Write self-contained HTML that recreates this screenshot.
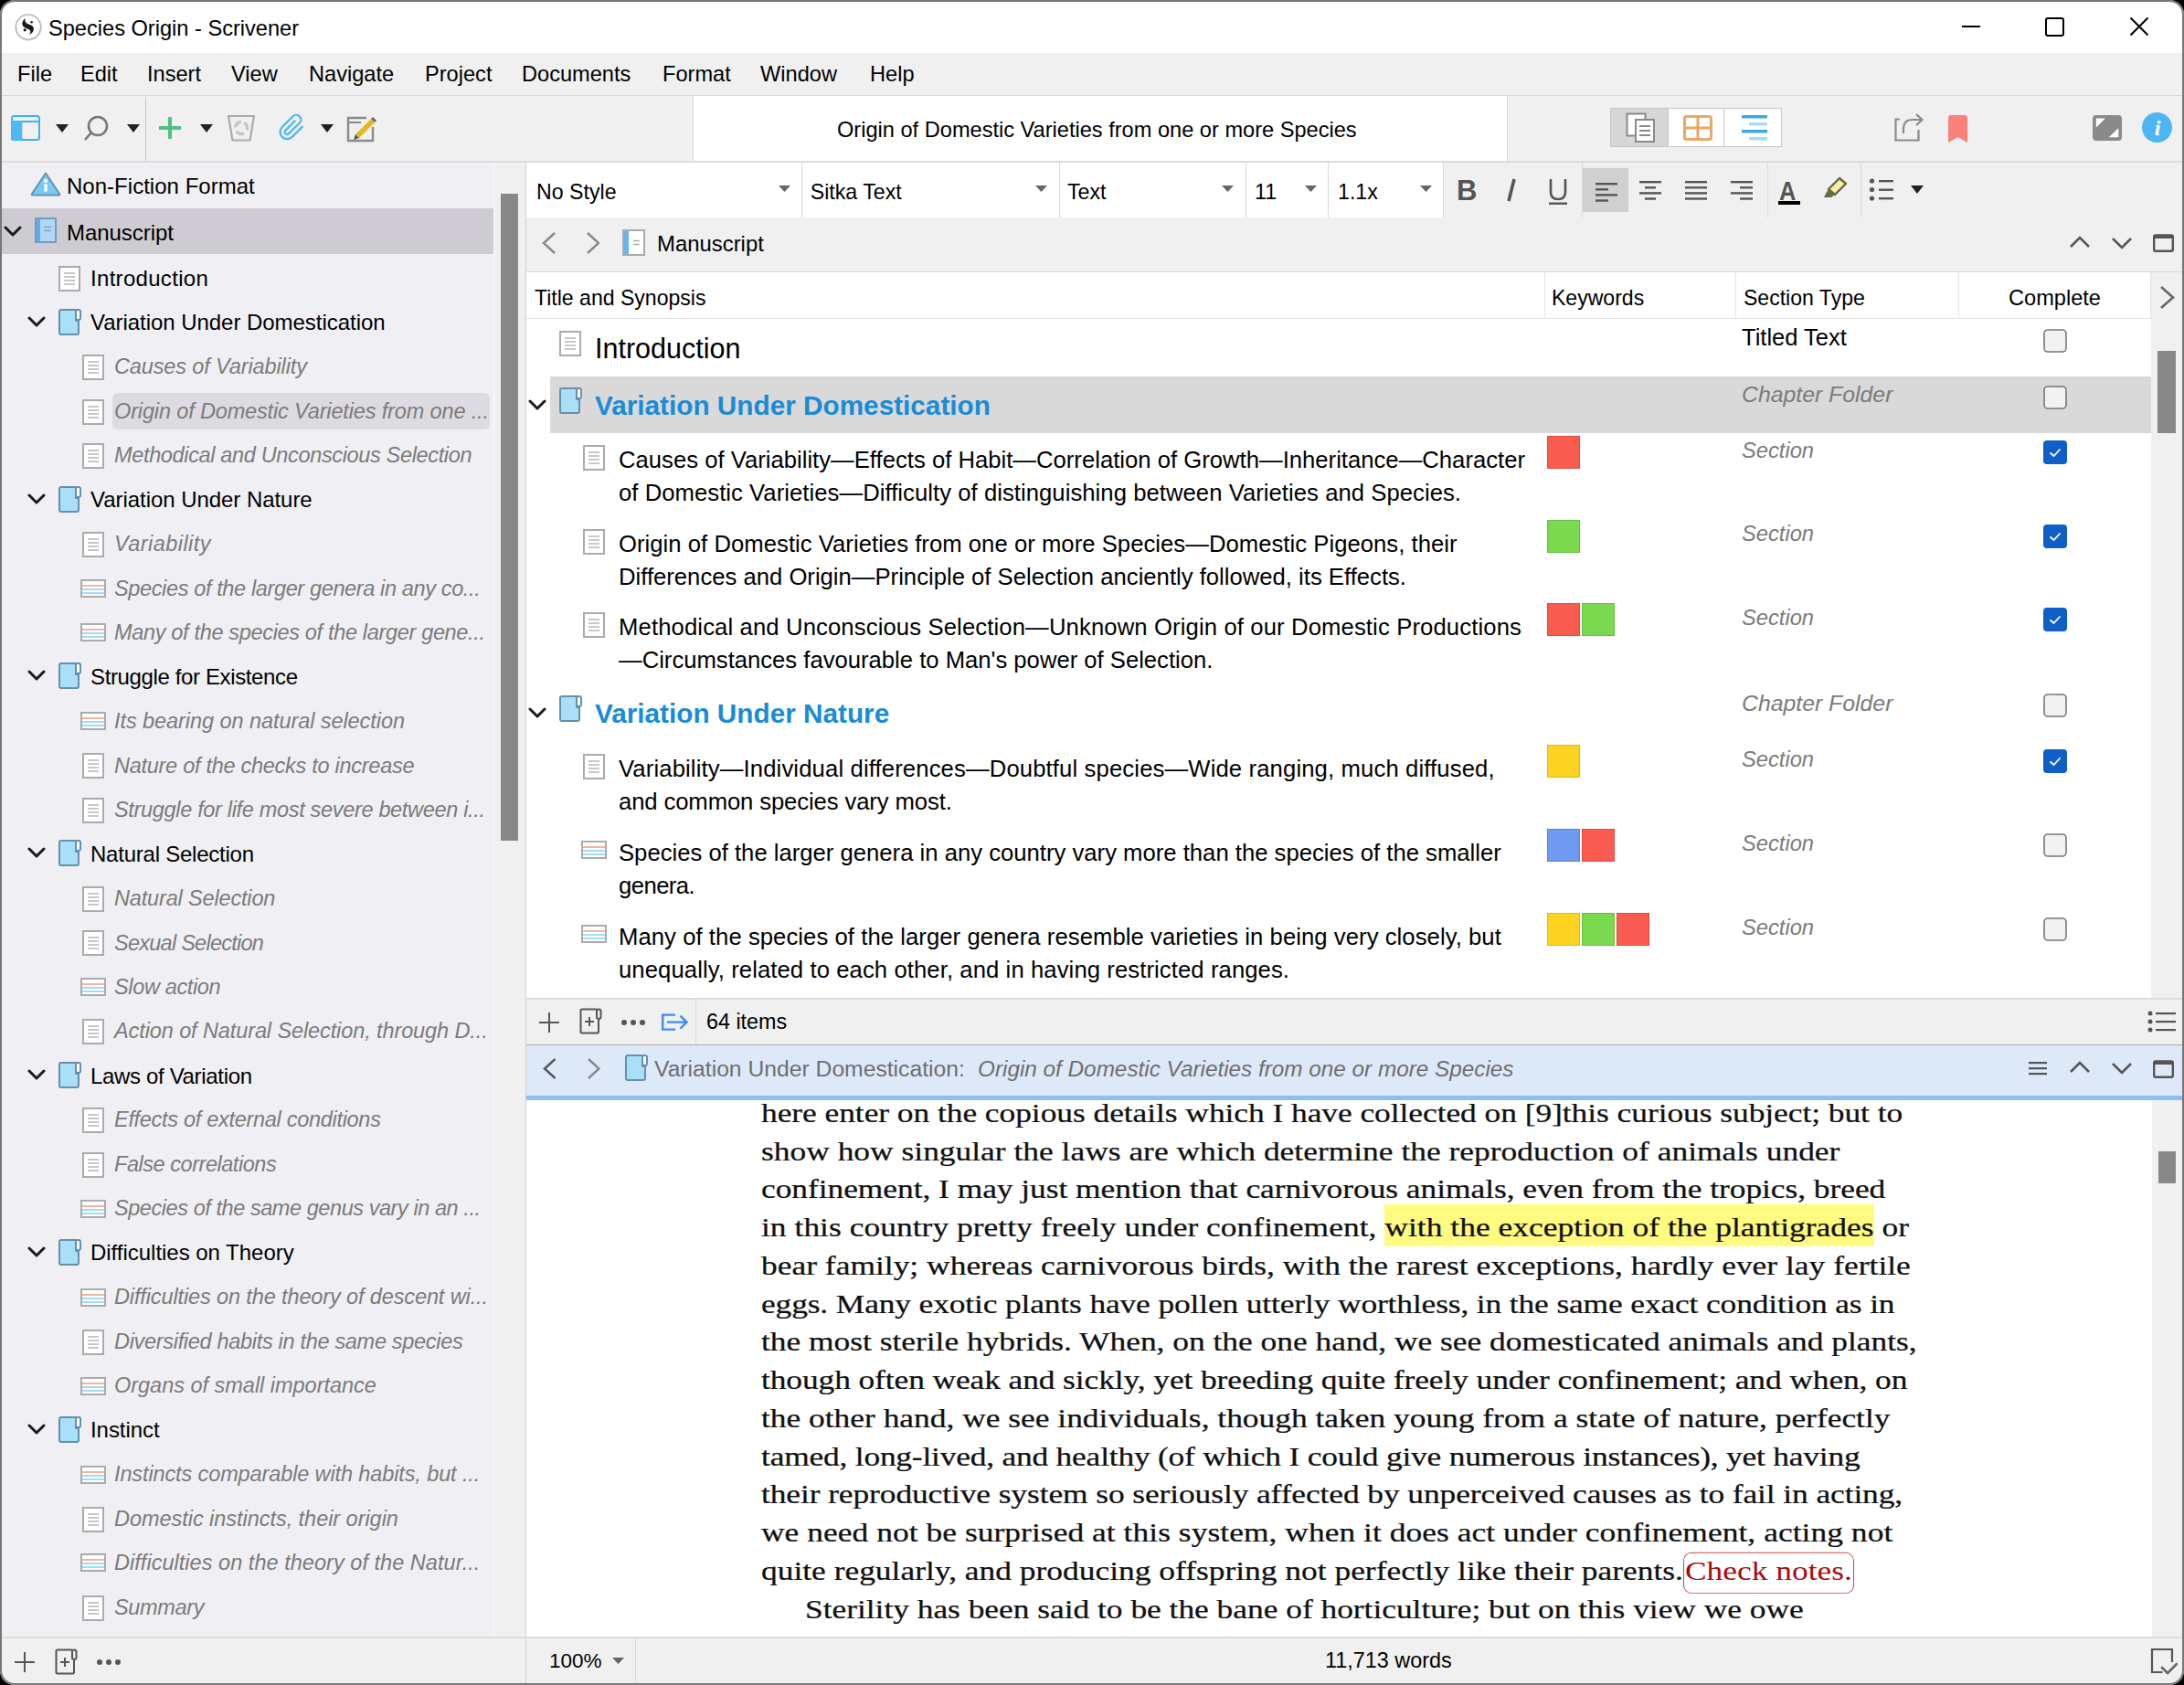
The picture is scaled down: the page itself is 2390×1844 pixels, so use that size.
<!DOCTYPE html>
<html><head><meta charset="utf-8"><style>
html,body{margin:0;padding:0;width:2390px;height:1844px;overflow:hidden;background:#000}
body{position:relative;font-family:'Liberation Sans', sans-serif}
</style></head><body>
<div style="position:absolute;left:0;top:0;width:2390px;height:1844px;border-radius:16px;overflow:hidden">
<div style="position:absolute;left:0px;top:0px;width:2390px;height:1844px;background:#f0f0f0"></div>
<div style="position:absolute;left:2px;top:2px;width:2386px;height:56px;background:#fff"></div>
<div style="position:absolute;left:2px;top:58px;width:2386px;height:47px;background:#f0f0f0"></div>
<div style="position:absolute;left:2px;top:104px;width:2386px;height:1px;background:#d8d8d8"></div>
<svg style="position:absolute;left:15px;top:14px;" width="32" height="32" viewBox="0 0 32 32"><circle cx="16" cy="15.7" r="13.6" fill="#fff" stroke="#a9afb9" stroke-width="1.5"/><circle cx="16" cy="15.9" r="14.6" fill="none" stroke="#d4d8de" stroke-width="0.8"/><path d="M12.8 6.2 C8.2 8.8 8.4 14.8 12.8 16.6 L16.2 18 C18.8 19.2 19.2 21.8 16.6 24 C22.8 22.2 23.6 15.6 19 13.6 L15.6 12.2 C12.8 11.2 11.8 8.8 12.8 6.2 Z" fill="#1a1a1a"/><circle cx="12.2" cy="18.8" r="1.6" fill="#111"/><circle cx="19.6" cy="10.3" r="1.3" fill="#222"/></svg>
<div style="position:absolute;left:53px;top:20.02px;font-family:'Liberation Sans', sans-serif;font-size:23.6px;line-height:23.6px;color:#000;white-space:nowrap;">Species Origin - Scrivener</div>
<div style="position:absolute;left:2147px;top:28px;width:20px;height:2px;background:#000"></div>
<div style="position:absolute;left:2238px;top:19px;width:17px;height:17px;border:2px solid #000;border-radius:3px"></div>
<svg style="position:absolute;left:2330px;top:18px;" width="22" height="22" viewBox="0 0 22 22"><path d="M1.5 1.5 L20.5 20.5 M20.5 1.5 L1.5 20.5" stroke="#000" stroke-width="2" fill="none"/></svg>
<div style="position:absolute;left:19px;top:69.52px;font-family:'Liberation Sans', sans-serif;font-size:23.6px;line-height:23.6px;color:#000;white-space:nowrap;">File</div>
<div style="position:absolute;left:88px;top:69.52px;font-family:'Liberation Sans', sans-serif;font-size:23.6px;line-height:23.6px;color:#000;white-space:nowrap;">Edit</div>
<div style="position:absolute;left:161px;top:69.52px;font-family:'Liberation Sans', sans-serif;font-size:23.6px;line-height:23.6px;color:#000;white-space:nowrap;">Insert</div>
<div style="position:absolute;left:253px;top:69.52px;font-family:'Liberation Sans', sans-serif;font-size:23.6px;line-height:23.6px;color:#000;white-space:nowrap;">View</div>
<div style="position:absolute;left:338px;top:69.52px;font-family:'Liberation Sans', sans-serif;font-size:23.6px;line-height:23.6px;color:#000;white-space:nowrap;">Navigate</div>
<div style="position:absolute;left:465px;top:69.52px;font-family:'Liberation Sans', sans-serif;font-size:23.6px;line-height:23.6px;color:#000;white-space:nowrap;">Project</div>
<div style="position:absolute;left:571px;top:69.52px;font-family:'Liberation Sans', sans-serif;font-size:23.6px;line-height:23.6px;color:#000;white-space:nowrap;">Documents</div>
<div style="position:absolute;left:725px;top:69.52px;font-family:'Liberation Sans', sans-serif;font-size:23.6px;line-height:23.6px;color:#000;white-space:nowrap;">Format</div>
<div style="position:absolute;left:832px;top:69.52px;font-family:'Liberation Sans', sans-serif;font-size:23.6px;line-height:23.6px;color:#000;white-space:nowrap;">Window</div>
<div style="position:absolute;left:952px;top:69.52px;font-family:'Liberation Sans', sans-serif;font-size:23.6px;line-height:23.6px;color:#000;white-space:nowrap;">Help</div>
<div style="position:absolute;left:2px;top:105px;width:2386px;height:72px;background:#f0f0f0"></div>
<div style="position:absolute;left:2px;top:176px;width:2386px;height:2px;background:#dcdcdc"></div>
<div style="position:absolute;left:159px;top:106px;width:1px;height:70px;background:#c8c8c8"></div>
<div style="position:absolute;left:758px;top:105px;width:890px;height:71px;background:#fff;border-left:1px solid #d8d8d8;border-right:1px solid #d8d8d8"></div>
<div style="position:absolute;left:916px;top:130.52px;font-family:'Liberation Sans', sans-serif;font-size:23.6px;line-height:23.6px;color:#000;white-space:nowrap;">Origin of Domestic Varieties from one or more Species</div>
<svg style="position:absolute;left:12px;top:126px;" width="32" height="28" viewBox="0 0 32 28"><rect x="1" y="1" width="30" height="26" rx="2.5" fill="none" stroke="#3db2f0" stroke-width="2"/><rect x="0" y="6" width="32" height="2" fill="#3db2f0"/><rect x="0.5" y="6" width="11.8" height="21.5" fill="#4db8f2"/></svg>
<svg style="position:absolute;left:61px;top:136px;" width="14" height="9" viewBox="0 0 14 9"><path d="M0 0 L14 0 L7.0 9 Z" fill="#222"/></svg>
<svg style="position:absolute;left:91px;top:126px;" width="34" height="30" viewBox="0 0 34 30"><circle cx="16" cy="12" r="10" fill="none" stroke="#777" stroke-width="2.6"/><path d="M9 19 L2 27" stroke="#777" stroke-width="2.6"/></svg>
<svg style="position:absolute;left:139px;top:136px;" width="14" height="9" viewBox="0 0 14 9"><path d="M0 0 L14 0 L7.0 9 Z" fill="#222"/></svg>
<svg style="position:absolute;left:174px;top:128px;" width="24" height="24" viewBox="0 0 24 24"><rect x="10" y="0" width="4" height="24" fill="#4cc37e"/><rect x="0" y="10" width="24" height="4" fill="#4cc37e"/></svg>
<svg style="position:absolute;left:219px;top:136px;" width="14" height="9" viewBox="0 0 14 9"><path d="M0 0 L14 0 L7.0 9 Z" fill="#222"/></svg>
<svg style="position:absolute;left:248px;top:125px;" width="32" height="30" viewBox="0 0 32 30"><path d="M2 2 L30 2 L25.5 28.5 L6.5 28.5 Z" fill="none" stroke="#ababab" stroke-width="2.2" stroke-linejoin="round"/><circle cx="16" cy="15" r="6.5" fill="none" stroke="#c4c4c4" stroke-width="3.4" stroke-dasharray="9 4.6" transform="rotate(-60 16 15)"/></svg>
<svg style="position:absolute;left:303.7px;top:123.9px;" width="30.7" height="30.7" viewBox="0 0 30.7 30.7"><g transform="scale(1.28)"><path d="M21.44 11.05l-9.19 9.19a6 6 0 0 1-8.49-8.49l9.19-9.19a4 4 0 0 1 5.66 5.66l-9.2 9.19a2 2 0 0 1-2.83-2.83l8.49-8.48" fill="none" stroke="#4db6f0" stroke-width="1.75" stroke-linecap="butt"/></g></svg>
<svg style="position:absolute;left:351px;top:136px;" width="14" height="9" viewBox="0 0 14 9"><path d="M0 0 L14 0 L7.0 9 Z" fill="#222"/></svg>
<svg style="position:absolute;left:379px;top:125px;" width="34" height="31" viewBox="0 0 34 31"><path d="M22 4 L2 4 L2 29 L29 29 L29 14" fill="none" stroke="#8a8a8a" stroke-width="2.4"/><path d="M2 9 L16 9" stroke="#8a8a8a" stroke-width="2"/><path d="M10 22 L27 5 L31 9 L14 26 Z" fill="#e8b820"/><path d="M10 22 L8 28 L14 26 Z" fill="#555"/><path d="M27 5 L29 3 L33 7 L31 9 Z" fill="#666"/></svg>
<div style="position:absolute;left:1762px;top:118px;width:188px;height:43px;background:#fff;border:1px solid #c6c6c6;box-sizing:border-box"></div>
<div style="position:absolute;left:1763px;top:119px;width:62px;height:41px;background:#d6d6d6"></div>
<div style="position:absolute;left:1825px;top:119px;width:1px;height:41px;background:#c6c6c6"></div>
<div style="position:absolute;left:1886px;top:119px;width:1px;height:41px;background:#c6c6c6"></div>
<svg style="position:absolute;left:1779px;top:123px;" width="34" height="34" viewBox="0 0 34 34"><rect x="1.5" y="1.5" width="20" height="24" fill="#fff" stroke="#8a8a8a" stroke-width="2"/><rect x="11" y="8" width="20" height="24" fill="#fff" stroke="#8a8a8a" stroke-width="2"/><path d="M15 15 H27 M15 20 H27 M15 25 H27" stroke="#8a8a8a" stroke-width="1.8"/></svg>
<svg style="position:absolute;left:1842px;top:126px;" width="32" height="28" viewBox="0 0 32 28"><rect x="1.5" y="1.5" width="29" height="25" rx="2" fill="#fff" stroke="#eaa865" stroke-width="3"/><rect x="14.5" y="1" width="3" height="26" fill="#eaa865"/><rect x="1" y="12.5" width="30" height="3" fill="#eaa865"/></svg>
<svg style="position:absolute;left:1906px;top:126px;" width="30" height="28" viewBox="0 0 30 28"><rect x="0" y="0" width="28" height="3.5" fill="#3aa8ea"/><rect x="8" y="8" width="20" height="3.5" fill="#a8dcf7"/><rect x="0" y="16" width="28" height="3.5" fill="#3aa8ea"/><rect x="8" y="24" width="20" height="3.5" fill="#a8dcf7"/></svg>
<svg style="position:absolute;left:2073px;top:124px;" width="34" height="32" viewBox="0 0 34 32"><path d="M6 6.5 H1.5 V29.5 H26.5 V18" fill="none" stroke="#8a8a8a" stroke-width="2.2"/><path d="M10 22 V17 Q10 7 20 7 H30" fill="none" stroke="#8a8a8a" stroke-width="2.2"/><path d="M24 1 L30.5 7 L24 13" fill="none" stroke="#8a8a8a" stroke-width="2.2"/></svg>
<svg style="position:absolute;left:2132px;top:126px;" width="21" height="30" viewBox="0 0 21 30"><path d="M0 3 Q0 0 3 0 L18 0 Q21 0 21 3 L21 30 L10.5 24 L0 30 Z" fill="#fa8078"/></svg>
<svg style="position:absolute;left:2290px;top:126px;" width="32" height="28" viewBox="0 0 32 28"><rect x="0" y="0" width="32" height="28" rx="4" fill="#8a8a8a"/><path d="M3.8 3.6 L14 3.6 L3.8 13.6 Z" fill="#fff"/><path d="M17.7 24.2 L28.3 24.2 L28.3 14.2 Z" fill="#fff"/></svg>
<svg style="position:absolute;left:2344px;top:123px;" width="33" height="33" viewBox="0 0 33 33"><circle cx="16.5" cy="16.5" r="16.5" fill="#4db6f0"/><text x="17" y="25" text-anchor="middle" font-family="Liberation Serif" font-style="italic" font-weight="bold" font-size="24" fill="#fff">i</text></svg>
<div style="position:absolute;left:2px;top:178px;width:538px;height:1614px;background:#f0eff4"></div>
<div style="position:absolute;left:540px;top:178px;width:35px;height:1614px;background:#f0f0f0;border-left:1px solid #fbfbfb;box-sizing:border-box"></div>
<div style="position:absolute;left:548px;top:212px;width:19px;height:708px;background:#888"></div>
<div style="position:absolute;left:575px;top:178px;width:1px;height:1664px;background:#d0d0d0"></div>
<div style="position:absolute;left:2px;top:1791px;width:573px;height:51px;background:#f0f0f0;border-top:2px solid #dcdcdc;box-sizing:border-box"></div>
<div style="position:absolute;left:576px;top:178px;width:1812px;height:60px;background:#f0f0f0"></div>
<div style="position:absolute;left:576px;top:178px;width:1003px;height:60px;background:#fff"></div>
<div style="position:absolute;left:576px;top:237.5px;width:1812px;height:1.8px;background:#d8d8d8"></div>
<div style="position:absolute;left:877px;top:178px;width:1px;height:60px;background:#d8d8d8"></div>
<div style="position:absolute;left:1159px;top:178px;width:1px;height:60px;background:#d8d8d8"></div>
<div style="position:absolute;left:1363px;top:178px;width:1px;height:60px;background:#d8d8d8"></div>
<div style="position:absolute;left:1453px;top:178px;width:1px;height:60px;background:#d8d8d8"></div>
<div style="position:absolute;left:1579px;top:178px;width:1px;height:60px;background:#d8d8d8"></div>
<div style="position:absolute;left:1731px;top:178px;width:1px;height:60px;background:#d8d8d8"></div>
<div style="position:absolute;left:1934px;top:178px;width:1px;height:60px;background:#d8d8d8"></div>
<div style="position:absolute;left:2036px;top:178px;width:1px;height:60px;background:#d8d8d8"></div>
<div style="position:absolute;left:576px;top:238px;width:1812px;height:60px;background:#f0f0f0"></div>
<div style="position:absolute;left:576px;top:297px;width:1812px;height:1px;background:#d8d8d8"></div>
<div style="position:absolute;left:576px;top:298px;width:1778px;height:51px;background:#fff"></div>
<div style="position:absolute;left:576px;top:348px;width:1778px;height:1px;background:#e4e4e4"></div>
<div style="position:absolute;left:576px;top:349px;width:1778px;height:744px;background:#fff"></div>
<div style="position:absolute;left:2354px;top:298px;width:34px;height:795px;background:#f0f0f0"></div>
<div style="position:absolute;left:2361px;top:384px;width:20px;height:90px;background:#888"></div>
<div style="position:absolute;left:576px;top:1092px;width:1812px;height:51px;background:#f0f0f0;border-top:2px solid #dcdcdc;box-sizing:border-box"></div>
<div style="position:absolute;left:761px;top:1093px;width:1px;height:50px;background:#d8d8d8"></div>
<div style="position:absolute;left:576px;top:1143px;width:1812px;height:56px;background:#dde9f8;border-top:1.5px solid #a8acb0;box-sizing:border-box"></div>
<div style="position:absolute;left:576px;top:1199px;width:1812px;height:5px;background:#8cc0f4"></div>
<div style="position:absolute;left:576px;top:1204px;width:1779px;height:588px;background:#fff"></div>
<div style="position:absolute;left:2355px;top:1204px;width:33px;height:588px;background:#f0f0f0"></div>
<div style="position:absolute;left:2362px;top:1260px;width:19px;height:35px;background:#888"></div>
<div style="position:absolute;left:576px;top:1791px;width:1812px;height:51px;background:#f0f0f0;border-top:2px solid #dcdcdc;box-sizing:border-box"></div>
<div style="position:absolute;left:695px;top:1792px;width:1px;height:50px;background:#d8d8d8"></div>
<div style="position:absolute;left:2px;top:228px;width:538px;height:50px;background:#cecbd2"></div>
<div style="position:absolute;left:123px;top:430px;width:413px;height:40px;background:#dddbe1;border-radius:6px"></div>
<svg style="position:absolute;left:33px;top:187px;" width="34" height="28" viewBox="0 0 34 28"><path d="M17 2.5 L32 25 Q33 26.5 31 26.5 L3 26.5 Q1 26.5 2 25 Z" fill="#78c9f8" stroke="#6a93a8" stroke-width="2" stroke-linejoin="round"/><circle cx="17" cy="11" r="2.2" fill="#fff"/><rect x="15.3" y="14.5" width="3.4" height="8" fill="#fff"/></svg>
<div style="position:absolute;left:73px;top:191.68px;font-family:'Liberation Sans', sans-serif;font-size:24px;line-height:24px;color:#000;white-space:nowrap;letter-spacing:0.024px">Non-Fiction Format</div>
<svg style="position:absolute;left:38px;top:238px;" width="24" height="28" viewBox="0 0 24 28"><rect x="1" y="1" width="22" height="26" fill="#b3d7f3" stroke="#709cc0" stroke-width="2"/><rect x="2" y="2" width="4" height="24" fill="#52aff0"/><path d="M10 10.5 H18 M10 14.5 H18" stroke="#7aa3c4" stroke-width="1.6"/></svg>
<svg style="position:absolute;left:4px;top:247.3px;" width="20" height="13" viewBox="0 0 20 13"><path d="M2 2 L10.0 10 L18 2" fill="none" stroke="#1a1a1a" stroke-width="3" stroke-linecap="round" stroke-linejoin="round"/></svg>
<div style="position:absolute;left:73px;top:242.98px;font-family:'Liberation Sans', sans-serif;font-size:24px;line-height:24px;color:#000;white-space:nowrap;letter-spacing:-0.053px">Manuscript</div>
<svg style="position:absolute;left:64px;top:291.12px;" width="24" height="28" viewBox="0 0 24 28"><rect x="1" y="1" width="22" height="26" fill="#fff" stroke="#ababab" stroke-width="2"/><path d="M6 8 H18 M6 12 H18 M6 16 H18 M6 20 H18" stroke="#c8c8c8" stroke-width="2"/></svg>
<div style="position:absolute;left:99px;top:292.80px;font-family:'Liberation Sans', sans-serif;font-size:24px;line-height:24px;color:#000;white-space:nowrap;letter-spacing:0.307px">Introduction</div>
<svg style="position:absolute;left:64px;top:337.605px;" width="25" height="29" viewBox="0 0 25 29"><path d="M3 1 H19 V13 H22 V26 Q22 28 20 28 H3 Q1 28 1 26 V3 Q1 1 3 1 Z" fill="#aadff9" stroke="#6690aa" stroke-width="2" stroke-linejoin="round"/><rect x="19" y="1" width="5" height="11" rx="2" fill="#fff" stroke="#6690aa" stroke-width="2"/></svg>
<svg style="position:absolute;left:30px;top:345.605px;" width="20" height="13" viewBox="0 0 20 13"><path d="M2 2 L10.0 10 L18 2" fill="none" stroke="#1a1a1a" stroke-width="3" stroke-linecap="round" stroke-linejoin="round"/></svg>
<div style="position:absolute;left:99px;top:341.29px;font-family:'Liberation Sans', sans-serif;font-size:24px;line-height:24px;color:#000;white-space:nowrap;letter-spacing:-0.04px">Variation Under Domestication</div>
<svg style="position:absolute;left:90px;top:388.09000000000003px;" width="24" height="28" viewBox="0 0 24 28"><rect x="1" y="1" width="22" height="26" fill="#fff" stroke="#ababab" stroke-width="2"/><path d="M6 8 H18 M6 12 H18 M6 16 H18 M6 20 H18" stroke="#c8c8c8" stroke-width="2"/></svg>
<div style="position:absolute;left:125px;top:390.20px;font-family:'Liberation Sans', sans-serif;font-size:23.5px;line-height:23.5px;color:#7b7b7b;white-space:nowrap;font-style:italic;letter-spacing:-0.122px">Causes of Variability</div>
<svg style="position:absolute;left:90px;top:436.57500000000005px;" width="24" height="28" viewBox="0 0 24 28"><rect x="1" y="1" width="22" height="26" fill="#fff" stroke="#ababab" stroke-width="2"/><path d="M6 8 H18 M6 12 H18 M6 16 H18 M6 20 H18" stroke="#c8c8c8" stroke-width="2"/></svg>
<div style="position:absolute;left:125px;top:438.68px;font-family:'Liberation Sans', sans-serif;font-size:23.5px;line-height:23.5px;color:#7b7b7b;white-space:nowrap;font-style:italic;letter-spacing:-0.144px">Origin of Domestic Varieties from one ...</div>
<svg style="position:absolute;left:90px;top:485.05999999999995px;" width="24" height="28" viewBox="0 0 24 28"><rect x="1" y="1" width="22" height="26" fill="#fff" stroke="#ababab" stroke-width="2"/><path d="M6 8 H18 M6 12 H18 M6 16 H18 M6 20 H18" stroke="#c8c8c8" stroke-width="2"/></svg>
<div style="position:absolute;left:125px;top:487.17px;font-family:'Liberation Sans', sans-serif;font-size:23.5px;line-height:23.5px;color:#7b7b7b;white-space:nowrap;font-style:italic;letter-spacing:-0.347px">Methodical and Unconscious Selection</div>
<svg style="position:absolute;left:64px;top:531.545px;" width="25" height="29" viewBox="0 0 25 29"><path d="M3 1 H19 V13 H22 V26 Q22 28 20 28 H3 Q1 28 1 26 V3 Q1 1 3 1 Z" fill="#aadff9" stroke="#6690aa" stroke-width="2" stroke-linejoin="round"/><rect x="19" y="1" width="5" height="11" rx="2" fill="#fff" stroke="#6690aa" stroke-width="2"/></svg>
<svg style="position:absolute;left:30px;top:539.545px;" width="20" height="13" viewBox="0 0 20 13"><path d="M2 2 L10.0 10 L18 2" fill="none" stroke="#1a1a1a" stroke-width="3" stroke-linecap="round" stroke-linejoin="round"/></svg>
<div style="position:absolute;left:99px;top:535.23px;font-family:'Liberation Sans', sans-serif;font-size:24px;line-height:24px;color:#000;white-space:nowrap;letter-spacing:-0.047px">Variation Under Nature</div>
<svg style="position:absolute;left:90px;top:582.03px;" width="24" height="28" viewBox="0 0 24 28"><rect x="1" y="1" width="22" height="26" fill="#fff" stroke="#ababab" stroke-width="2"/><path d="M6 8 H18 M6 12 H18 M6 16 H18 M6 20 H18" stroke="#c8c8c8" stroke-width="2"/></svg>
<div style="position:absolute;left:125px;top:584.14px;font-family:'Liberation Sans', sans-serif;font-size:23.5px;line-height:23.5px;color:#7b7b7b;white-space:nowrap;font-style:italic;letter-spacing:0.45px">Variability</div>
<svg style="position:absolute;left:88px;top:633.8149999999999px;" width="28" height="20" viewBox="0 0 28 20"><rect x="1" y="1" width="26" height="18" fill="#fff" stroke="#ababab" stroke-width="2"/><path d="M2 7 H26" stroke="#f5b4a0" stroke-width="2"/><path d="M2 11 H26 M2 15 H26" stroke="#a2daf8" stroke-width="2"/></svg>
<div style="position:absolute;left:125px;top:632.62px;font-family:'Liberation Sans', sans-serif;font-size:23.5px;line-height:23.5px;color:#7b7b7b;white-space:nowrap;font-style:italic;letter-spacing:-0.368px">Species of the larger genera in any co...</div>
<svg style="position:absolute;left:88px;top:682.3px;" width="28" height="20" viewBox="0 0 28 20"><rect x="1" y="1" width="26" height="18" fill="#fff" stroke="#ababab" stroke-width="2"/><path d="M2 7 H26" stroke="#f5b4a0" stroke-width="2"/><path d="M2 11 H26 M2 15 H26" stroke="#a2daf8" stroke-width="2"/></svg>
<div style="position:absolute;left:125px;top:681.11px;font-family:'Liberation Sans', sans-serif;font-size:23.5px;line-height:23.5px;color:#7b7b7b;white-space:nowrap;font-style:italic;letter-spacing:-0.333px">Many of the species of the larger gene...</div>
<svg style="position:absolute;left:64px;top:725.485px;" width="25" height="29" viewBox="0 0 25 29"><path d="M3 1 H19 V13 H22 V26 Q22 28 20 28 H3 Q1 28 1 26 V3 Q1 1 3 1 Z" fill="#aadff9" stroke="#6690aa" stroke-width="2" stroke-linejoin="round"/><rect x="19" y="1" width="5" height="11" rx="2" fill="#fff" stroke="#6690aa" stroke-width="2"/></svg>
<svg style="position:absolute;left:30px;top:733.485px;" width="20" height="13" viewBox="0 0 20 13"><path d="M2 2 L10.0 10 L18 2" fill="none" stroke="#1a1a1a" stroke-width="3" stroke-linecap="round" stroke-linejoin="round"/></svg>
<div style="position:absolute;left:99px;top:729.17px;font-family:'Liberation Sans', sans-serif;font-size:24px;line-height:24px;color:#000;white-space:nowrap;letter-spacing:-0.371px">Struggle for Existence</div>
<svg style="position:absolute;left:88px;top:779.2699999999999px;" width="28" height="20" viewBox="0 0 28 20"><rect x="1" y="1" width="26" height="18" fill="#fff" stroke="#ababab" stroke-width="2"/><path d="M2 7 H26" stroke="#f5b4a0" stroke-width="2"/><path d="M2 11 H26 M2 15 H26" stroke="#a2daf8" stroke-width="2"/></svg>
<div style="position:absolute;left:125px;top:778.08px;font-family:'Liberation Sans', sans-serif;font-size:23.5px;line-height:23.5px;color:#7b7b7b;white-space:nowrap;font-style:italic;letter-spacing:-0.067px">Its bearing on natural selection</div>
<svg style="position:absolute;left:90px;top:824.4549999999999px;" width="24" height="28" viewBox="0 0 24 28"><rect x="1" y="1" width="22" height="26" fill="#fff" stroke="#ababab" stroke-width="2"/><path d="M6 8 H18 M6 12 H18 M6 16 H18 M6 20 H18" stroke="#c8c8c8" stroke-width="2"/></svg>
<div style="position:absolute;left:125px;top:826.56px;font-family:'Liberation Sans', sans-serif;font-size:23.5px;line-height:23.5px;color:#7b7b7b;white-space:nowrap;font-style:italic;letter-spacing:-0.275px">Nature of the checks to increase</div>
<svg style="position:absolute;left:90px;top:872.9399999999999px;" width="24" height="28" viewBox="0 0 24 28"><rect x="1" y="1" width="22" height="26" fill="#fff" stroke="#ababab" stroke-width="2"/><path d="M6 8 H18 M6 12 H18 M6 16 H18 M6 20 H18" stroke="#c8c8c8" stroke-width="2"/></svg>
<div style="position:absolute;left:125px;top:875.05px;font-family:'Liberation Sans', sans-serif;font-size:23.5px;line-height:23.5px;color:#7b7b7b;white-space:nowrap;font-style:italic;letter-spacing:-0.324px">Struggle for life most severe between i...</div>
<svg style="position:absolute;left:64px;top:919.425px;" width="25" height="29" viewBox="0 0 25 29"><path d="M3 1 H19 V13 H22 V26 Q22 28 20 28 H3 Q1 28 1 26 V3 Q1 1 3 1 Z" fill="#aadff9" stroke="#6690aa" stroke-width="2" stroke-linejoin="round"/><rect x="19" y="1" width="5" height="11" rx="2" fill="#fff" stroke="#6690aa" stroke-width="2"/></svg>
<svg style="position:absolute;left:30px;top:927.425px;" width="20" height="13" viewBox="0 0 20 13"><path d="M2 2 L10.0 10 L18 2" fill="none" stroke="#1a1a1a" stroke-width="3" stroke-linecap="round" stroke-linejoin="round"/></svg>
<div style="position:absolute;left:99px;top:923.11px;font-family:'Liberation Sans', sans-serif;font-size:24px;line-height:24px;color:#000;white-space:nowrap;letter-spacing:-0.235px">Natural Selection</div>
<svg style="position:absolute;left:90px;top:969.91px;" width="24" height="28" viewBox="0 0 24 28"><rect x="1" y="1" width="22" height="26" fill="#fff" stroke="#ababab" stroke-width="2"/><path d="M6 8 H18 M6 12 H18 M6 16 H18 M6 20 H18" stroke="#c8c8c8" stroke-width="2"/></svg>
<div style="position:absolute;left:125px;top:972.02px;font-family:'Liberation Sans', sans-serif;font-size:23.5px;line-height:23.5px;color:#7b7b7b;white-space:nowrap;font-style:italic;letter-spacing:-0.16px">Natural Selection</div>
<svg style="position:absolute;left:90px;top:1018.395px;" width="24" height="28" viewBox="0 0 24 28"><rect x="1" y="1" width="22" height="26" fill="#fff" stroke="#ababab" stroke-width="2"/><path d="M6 8 H18 M6 12 H18 M6 16 H18 M6 20 H18" stroke="#c8c8c8" stroke-width="2"/></svg>
<div style="position:absolute;left:125px;top:1020.50px;font-family:'Liberation Sans', sans-serif;font-size:23.5px;line-height:23.5px;color:#7b7b7b;white-space:nowrap;font-style:italic;letter-spacing:-0.744px">Sexual Selection</div>
<svg style="position:absolute;left:88px;top:1070.18px;" width="28" height="20" viewBox="0 0 28 20"><rect x="1" y="1" width="26" height="18" fill="#fff" stroke="#ababab" stroke-width="2"/><path d="M2 7 H26" stroke="#f5b4a0" stroke-width="2"/><path d="M2 11 H26 M2 15 H26" stroke="#a2daf8" stroke-width="2"/></svg>
<div style="position:absolute;left:125px;top:1068.99px;font-family:'Liberation Sans', sans-serif;font-size:23.5px;line-height:23.5px;color:#7b7b7b;white-space:nowrap;font-style:italic;letter-spacing:-0.358px">Slow action</div>
<svg style="position:absolute;left:90px;top:1115.365px;" width="24" height="28" viewBox="0 0 24 28"><rect x="1" y="1" width="22" height="26" fill="#fff" stroke="#ababab" stroke-width="2"/><path d="M6 8 H18 M6 12 H18 M6 16 H18 M6 20 H18" stroke="#c8c8c8" stroke-width="2"/></svg>
<div style="position:absolute;left:125px;top:1117.47px;font-family:'Liberation Sans', sans-serif;font-size:23.5px;line-height:23.5px;color:#7b7b7b;white-space:nowrap;font-style:italic;letter-spacing:-0.102px">Action of Natural Selection, through D...</div>
<svg style="position:absolute;left:64px;top:1161.8500000000001px;" width="25" height="29" viewBox="0 0 25 29"><path d="M3 1 H19 V13 H22 V26 Q22 28 20 28 H3 Q1 28 1 26 V3 Q1 1 3 1 Z" fill="#aadff9" stroke="#6690aa" stroke-width="2" stroke-linejoin="round"/><rect x="19" y="1" width="5" height="11" rx="2" fill="#fff" stroke="#6690aa" stroke-width="2"/></svg>
<svg style="position:absolute;left:30px;top:1169.8500000000001px;" width="20" height="13" viewBox="0 0 20 13"><path d="M2 2 L10.0 10 L18 2" fill="none" stroke="#1a1a1a" stroke-width="3" stroke-linecap="round" stroke-linejoin="round"/></svg>
<div style="position:absolute;left:99px;top:1165.53px;font-family:'Liberation Sans', sans-serif;font-size:24px;line-height:24px;color:#000;white-space:nowrap;letter-spacing:-0.333px">Laws of Variation</div>
<svg style="position:absolute;left:90px;top:1212.335px;" width="24" height="28" viewBox="0 0 24 28"><rect x="1" y="1" width="22" height="26" fill="#fff" stroke="#ababab" stroke-width="2"/><path d="M6 8 H18 M6 12 H18 M6 16 H18 M6 20 H18" stroke="#c8c8c8" stroke-width="2"/></svg>
<div style="position:absolute;left:125px;top:1214.44px;font-family:'Liberation Sans', sans-serif;font-size:23.5px;line-height:23.5px;color:#7b7b7b;white-space:nowrap;font-style:italic;letter-spacing:-0.295px">Effects of external conditions</div>
<svg style="position:absolute;left:90px;top:1260.8200000000002px;" width="24" height="28" viewBox="0 0 24 28"><rect x="1" y="1" width="22" height="26" fill="#fff" stroke="#ababab" stroke-width="2"/><path d="M6 8 H18 M6 12 H18 M6 16 H18 M6 20 H18" stroke="#c8c8c8" stroke-width="2"/></svg>
<div style="position:absolute;left:125px;top:1262.93px;font-family:'Liberation Sans', sans-serif;font-size:23.5px;line-height:23.5px;color:#7b7b7b;white-space:nowrap;font-style:italic;letter-spacing:-0.458px">False correlations</div>
<svg style="position:absolute;left:88px;top:1312.605px;" width="28" height="20" viewBox="0 0 28 20"><rect x="1" y="1" width="26" height="18" fill="#fff" stroke="#ababab" stroke-width="2"/><path d="M2 7 H26" stroke="#f5b4a0" stroke-width="2"/><path d="M2 11 H26 M2 15 H26" stroke="#a2daf8" stroke-width="2"/></svg>
<div style="position:absolute;left:125px;top:1311.41px;font-family:'Liberation Sans', sans-serif;font-size:23.5px;line-height:23.5px;color:#7b7b7b;white-space:nowrap;font-style:italic;letter-spacing:-0.436px">Species of the same genus vary in an ...</div>
<svg style="position:absolute;left:64px;top:1355.79px;" width="25" height="29" viewBox="0 0 25 29"><path d="M3 1 H19 V13 H22 V26 Q22 28 20 28 H3 Q1 28 1 26 V3 Q1 1 3 1 Z" fill="#aadff9" stroke="#6690aa" stroke-width="2" stroke-linejoin="round"/><rect x="19" y="1" width="5" height="11" rx="2" fill="#fff" stroke="#6690aa" stroke-width="2"/></svg>
<svg style="position:absolute;left:30px;top:1363.79px;" width="20" height="13" viewBox="0 0 20 13"><path d="M2 2 L10.0 10 L18 2" fill="none" stroke="#1a1a1a" stroke-width="3" stroke-linecap="round" stroke-linejoin="round"/></svg>
<div style="position:absolute;left:99px;top:1359.47px;font-family:'Liberation Sans', sans-serif;font-size:24px;line-height:24px;color:#000;white-space:nowrap;letter-spacing:-0.025px">Difficulties on Theory</div>
<svg style="position:absolute;left:88px;top:1409.575px;" width="28" height="20" viewBox="0 0 28 20"><rect x="1" y="1" width="26" height="18" fill="#fff" stroke="#ababab" stroke-width="2"/><path d="M2 7 H26" stroke="#f5b4a0" stroke-width="2"/><path d="M2 11 H26 M2 15 H26" stroke="#a2daf8" stroke-width="2"/></svg>
<div style="position:absolute;left:125px;top:1408.38px;font-family:'Liberation Sans', sans-serif;font-size:23.5px;line-height:23.5px;color:#7b7b7b;white-space:nowrap;font-style:italic;letter-spacing:-0.121px">Difficulties on the theory of descent wi...</div>
<svg style="position:absolute;left:90px;top:1454.76px;" width="24" height="28" viewBox="0 0 24 28"><rect x="1" y="1" width="22" height="26" fill="#fff" stroke="#ababab" stroke-width="2"/><path d="M6 8 H18 M6 12 H18 M6 16 H18 M6 20 H18" stroke="#c8c8c8" stroke-width="2"/></svg>
<div style="position:absolute;left:125px;top:1456.87px;font-family:'Liberation Sans', sans-serif;font-size:23.5px;line-height:23.5px;color:#7b7b7b;white-space:nowrap;font-style:italic;letter-spacing:-0.31px">Diversified habits in the same species</div>
<svg style="position:absolute;left:88px;top:1506.545px;" width="28" height="20" viewBox="0 0 28 20"><rect x="1" y="1" width="26" height="18" fill="#fff" stroke="#ababab" stroke-width="2"/><path d="M2 7 H26" stroke="#f5b4a0" stroke-width="2"/><path d="M2 11 H26 M2 15 H26" stroke="#a2daf8" stroke-width="2"/></svg>
<div style="position:absolute;left:125px;top:1505.35px;font-family:'Liberation Sans', sans-serif;font-size:23.5px;line-height:23.5px;color:#7b7b7b;white-space:nowrap;font-style:italic;letter-spacing:-0.018px">Organs of small importance</div>
<svg style="position:absolute;left:64px;top:1549.73px;" width="25" height="29" viewBox="0 0 25 29"><path d="M3 1 H19 V13 H22 V26 Q22 28 20 28 H3 Q1 28 1 26 V3 Q1 1 3 1 Z" fill="#aadff9" stroke="#6690aa" stroke-width="2" stroke-linejoin="round"/><rect x="19" y="1" width="5" height="11" rx="2" fill="#fff" stroke="#6690aa" stroke-width="2"/></svg>
<svg style="position:absolute;left:30px;top:1557.73px;" width="20" height="13" viewBox="0 0 20 13"><path d="M2 2 L10.0 10 L18 2" fill="none" stroke="#1a1a1a" stroke-width="3" stroke-linecap="round" stroke-linejoin="round"/></svg>
<div style="position:absolute;left:99px;top:1553.41px;font-family:'Liberation Sans', sans-serif;font-size:24px;line-height:24px;color:#000;white-space:nowrap;letter-spacing:-0.047px">Instinct</div>
<svg style="position:absolute;left:88px;top:1603.515px;" width="28" height="20" viewBox="0 0 28 20"><rect x="1" y="1" width="26" height="18" fill="#fff" stroke="#ababab" stroke-width="2"/><path d="M2 7 H26" stroke="#f5b4a0" stroke-width="2"/><path d="M2 11 H26 M2 15 H26" stroke="#a2daf8" stroke-width="2"/></svg>
<div style="position:absolute;left:125px;top:1602.32px;font-family:'Liberation Sans', sans-serif;font-size:23.5px;line-height:23.5px;color:#7b7b7b;white-space:nowrap;font-style:italic;letter-spacing:-0.116px">Instincts comparable with habits, but ...</div>
<svg style="position:absolute;left:90px;top:1648.7px;" width="24" height="28" viewBox="0 0 24 28"><rect x="1" y="1" width="22" height="26" fill="#fff" stroke="#ababab" stroke-width="2"/><path d="M6 8 H18 M6 12 H18 M6 16 H18 M6 20 H18" stroke="#c8c8c8" stroke-width="2"/></svg>
<div style="position:absolute;left:125px;top:1650.81px;font-family:'Liberation Sans', sans-serif;font-size:23.5px;line-height:23.5px;color:#7b7b7b;white-space:nowrap;font-style:italic;letter-spacing:-0.04px">Domestic instincts, their origin</div>
<svg style="position:absolute;left:88px;top:1700.4850000000001px;" width="28" height="20" viewBox="0 0 28 20"><rect x="1" y="1" width="26" height="18" fill="#fff" stroke="#ababab" stroke-width="2"/><path d="M2 7 H26" stroke="#f5b4a0" stroke-width="2"/><path d="M2 11 H26 M2 15 H26" stroke="#a2daf8" stroke-width="2"/></svg>
<div style="position:absolute;left:125px;top:1699.29px;font-family:'Liberation Sans', sans-serif;font-size:23.5px;line-height:23.5px;color:#7b7b7b;white-space:nowrap;font-style:italic;letter-spacing:0.036px">Difficulties on the theory of the Natur...</div>
<svg style="position:absolute;left:90px;top:1745.67px;" width="24" height="28" viewBox="0 0 24 28"><rect x="1" y="1" width="22" height="26" fill="#fff" stroke="#ababab" stroke-width="2"/><path d="M6 8 H18 M6 12 H18 M6 16 H18 M6 20 H18" stroke="#c8c8c8" stroke-width="2"/></svg>
<div style="position:absolute;left:125px;top:1747.78px;font-family:'Liberation Sans', sans-serif;font-size:23.5px;line-height:23.5px;color:#7b7b7b;white-space:nowrap;font-style:italic;letter-spacing:-0.359px">Summary</div>
<svg style="position:absolute;left:15px;top:1807px;" width="24" height="24" viewBox="0 0 24 24"><path d="M12 1 V23 M1 12 H23" stroke="#555" stroke-width="2"/></svg>
<svg style="position:absolute;left:60px;top:1803.5px;" width="26" height="30" viewBox="0 0 26 30"><path d="M19 1.5 H3 Q1.5 1.5 1.5 3 V26 Q1.5 27.5 3 27.5 H19.5 Q21 27.5 21 26 V12.5" fill="none" stroke="#555" stroke-width="2"/><rect x="19" y="1.5" width="4.5" height="10.5" rx="2.2" fill="none" stroke="#555" stroke-width="2"/><path d="M11 10 V20 M6 15 H16" stroke="#555" stroke-width="2"/></svg>
<svg style="position:absolute;left:105px;top:1815px;" width="30" height="8" viewBox="0 0 30 8"><circle cx="4" cy="4" r="3" fill="#555"/><circle cx="14" cy="4" r="3" fill="#555"/><circle cx="24" cy="4" r="3" fill="#555"/></svg>
<div style="position:absolute;left:587px;top:199.36px;font-family:'Liberation Sans', sans-serif;font-size:23.2px;line-height:23.2px;color:#000;white-space:nowrap;">No Style</div>
<svg style="position:absolute;left:852px;top:203px;" width="13" height="7" viewBox="0 0 13 7"><path d="M0 0 L13 0 L6.5 7 Z" fill="#666"/></svg>
<div style="position:absolute;left:886.7px;top:199.36px;font-family:'Liberation Sans', sans-serif;font-size:23.2px;line-height:23.2px;color:#000;white-space:nowrap;">Sitka Text</div>
<svg style="position:absolute;left:1133px;top:203px;" width="13" height="7" viewBox="0 0 13 7"><path d="M0 0 L13 0 L6.5 7 Z" fill="#666"/></svg>
<div style="position:absolute;left:1168px;top:199.36px;font-family:'Liberation Sans', sans-serif;font-size:23.2px;line-height:23.2px;color:#000;white-space:nowrap;">Text</div>
<svg style="position:absolute;left:1337px;top:203px;" width="13" height="7" viewBox="0 0 13 7"><path d="M0 0 L13 0 L6.5 7 Z" fill="#666"/></svg>
<div style="position:absolute;left:1373px;top:199.36px;font-family:'Liberation Sans', sans-serif;font-size:23.2px;line-height:23.2px;color:#000;white-space:nowrap;">11</div>
<svg style="position:absolute;left:1428px;top:203px;" width="13" height="7" viewBox="0 0 13 7"><path d="M0 0 L13 0 L6.5 7 Z" fill="#666"/></svg>
<div style="position:absolute;left:1464px;top:199.36px;font-family:'Liberation Sans', sans-serif;font-size:23.2px;line-height:23.2px;color:#000;white-space:nowrap;">1.1x</div>
<svg style="position:absolute;left:1554px;top:203px;" width="13" height="7" viewBox="0 0 13 7"><path d="M0 0 L13 0 L6.5 7 Z" fill="#666"/></svg>
<div style="position:absolute;left:1594px;top:193.26px;font-family:'Liberation Sans', sans-serif;font-size:31px;line-height:31px;color:#555;white-space:nowrap;"><b>B</b></div>
<svg style="position:absolute;left:1646px;top:195px;" width="16" height="26" viewBox="0 0 16 26"><path d="M11 1 L5 25" stroke="#555" stroke-width="3.6"/></svg>
<svg style="position:absolute;left:1694px;top:195px;" width="22" height="30" viewBox="0 0 22 30"><path d="M3 1 V15 Q3 23 11 23 Q19 23 19 15 V1" fill="none" stroke="#555" stroke-width="2.6"/><rect x="1" y="26.5" width="20" height="2.4" fill="#555"/></svg>
<div style="position:absolute;left:1732px;top:184px;width:50px;height:48px;background:#d0d0d0"></div>
<svg style="position:absolute;left:1746px;top:200px;" width="26" height="22" viewBox="0 0 26 22"><rect x="0" y="0.0" width="24" height="2.4" fill="#555"/><rect x="0" y="6.1" width="14" height="2.4" fill="#555"/><rect x="0" y="12.2" width="24" height="2.4" fill="#555"/><rect x="0" y="18.3" width="14" height="2.4" fill="#555"/></svg>
<svg style="position:absolute;left:1794px;top:197.5px;" width="26" height="22" viewBox="0 0 26 22"><rect x="0" y="0.0" width="24" height="2.4" fill="#555"/><rect x="6" y="6.1" width="12" height="2.4" fill="#555"/><rect x="0" y="12.2" width="24" height="2.4" fill="#555"/><rect x="6" y="18.3" width="12" height="2.4" fill="#555"/></svg>
<svg style="position:absolute;left:1844px;top:197.5px;" width="26" height="22" viewBox="0 0 26 22"><rect x="0" y="0.0" width="24" height="2.4" fill="#555"/><rect x="0" y="6.1" width="24" height="2.4" fill="#555"/><rect x="0" y="12.2" width="24" height="2.4" fill="#555"/><rect x="0" y="18.3" width="24" height="2.4" fill="#555"/></svg>
<svg style="position:absolute;left:1894px;top:197.5px;" width="26" height="22" viewBox="0 0 26 22"><rect x="0" y="0.0" width="24" height="2.4" fill="#555"/><rect x="10" y="6.1" width="14" height="2.4" fill="#555"/><rect x="0" y="12.2" width="24" height="2.4" fill="#555"/><rect x="10" y="18.3" width="14" height="2.4" fill="#555"/></svg>
<div style="position:absolute;left:1947px;top:193.60px;font-family:'Liberation Sans', sans-serif;font-size:30px;line-height:30px;color:#555;white-space:nowrap;font-weight:bold;transform:scaleX(0.85);transform-origin:left">A</div>
<div style="position:absolute;left:1946px;top:220px;width:24px;height:4px;background:#000"></div>
<svg style="position:absolute;left:1995px;top:192px;" width="28" height="26" viewBox="0 0 28 26"><path d="M6 15 L18 3 L25 9 L13 21 Z" fill="#f7f0a0" stroke="#666644" stroke-width="2.4" stroke-linejoin="round"/><path d="M6 15 L13 21 L9 24 L1 24 L4 18 Z" fill="#6b6b48"/></svg>
<svg style="position:absolute;left:2045px;top:195px;" width="30" height="26" viewBox="0 0 30 26"><circle cx="3.5" cy="3" r="2.6" fill="#555"/><circle cx="3.5" cy="12.5" r="2.6" fill="#555"/><circle cx="3.5" cy="22" r="2.6" fill="#555"/><rect x="11" y="2" width="16" height="2.4" fill="#555"/><rect x="11" y="11.5" width="16" height="2.4" fill="#555"/><rect x="11" y="21" width="16" height="2.4" fill="#555"/></svg>
<svg style="position:absolute;left:2091px;top:203px;" width="14" height="9" viewBox="0 0 14 9"><path d="M0 0 L14 0 L7.0 9 Z" fill="#222"/></svg>
<svg style="position:absolute;left:593px;top:253px;" width="16" height="26" viewBox="0 0 16 26"><path d="M14 2 L2 13.0 L14 24" fill="none" stroke="#888" stroke-width="2.4"/></svg>
<svg style="position:absolute;left:641px;top:253px;" width="16" height="26" viewBox="0 0 16 26"><path d="M2 2 L14 13.0 L2 24" fill="none" stroke="#888" stroke-width="2.4"/></svg>
<svg style="position:absolute;left:681px;top:251px;" width="26" height="30" viewBox="0 0 26 30"><rect x="1" y="1" width="23" height="27" fill="#fff" stroke="#aaa" stroke-width="2"/><rect x="2" y="2" width="5" height="25" fill="#62b6f2"/><path d="M12 12.5 H19 M12 16.5 H19" stroke="#aaa" stroke-width="1.6"/></svg>
<div style="position:absolute;left:719px;top:254.97px;font-family:'Liberation Sans', sans-serif;font-size:23.9px;line-height:23.9px;color:#000;white-space:nowrap;">Manuscript</div>
<svg style="position:absolute;left:2264px;top:257.5px;" width="24" height="14" viewBox="0 0 24 14"><path d="M2 12 L12.0 2 L22 12" fill="none" stroke="#555" stroke-width="2.6"/></svg>
<svg style="position:absolute;left:2310px;top:258.5px;" width="24" height="14" viewBox="0 0 24 14"><path d="M2 2 L12.0 12 L22 2" fill="none" stroke="#555" stroke-width="2.6"/></svg>
<svg style="position:absolute;left:2356px;top:256px;" width="23" height="20" viewBox="0 0 23 20"><rect x="1.2" y="1.5" width="20.6" height="17.3" rx="1.5" fill="none" stroke="#555" stroke-width="2.4"/><rect x="1" y="1" width="21" height="4" fill="#555"/></svg>
<div style="position:absolute;left:585px;top:314.99px;font-family:'Liberation Sans', sans-serif;font-size:23.05px;line-height:23.05px;color:#000;white-space:nowrap;">Title and Synopsis</div>
<div style="position:absolute;left:1690px;top:298px;width:1px;height:51px;background:#e4e4e4"></div>
<div style="position:absolute;left:1698px;top:314.99px;font-family:'Liberation Sans', sans-serif;font-size:23.05px;line-height:23.05px;color:#000;white-space:nowrap;">Keywords</div>
<div style="position:absolute;left:1899px;top:298px;width:1px;height:51px;background:#e4e4e4"></div>
<div style="position:absolute;left:1908px;top:314.99px;font-family:'Liberation Sans', sans-serif;font-size:23.05px;line-height:23.05px;color:#000;white-space:nowrap;">Section Type</div>
<div style="position:absolute;left:2143px;top:298px;width:1px;height:51px;background:#e4e4e4"></div>
<div style="position:absolute;left:2198px;top:314.52px;font-family:'Liberation Sans', sans-serif;font-size:23.6px;line-height:23.6px;color:#000;white-space:nowrap;">Complete</div>
<div style="position:absolute;left:2353px;top:298px;width:1px;height:51px;background:#e4e4e4"></div>
<svg style="position:absolute;left:2363px;top:311.5px;" width="17" height="27" viewBox="0 0 17 27"><path d="M2 2 L15 13.5 L2 25" fill="none" stroke="#666" stroke-width="2.6"/></svg>
<div style="position:absolute;left:602px;top:412px;width:1752px;height:62px;background:#d9d9d9"></div>
<svg style="position:absolute;left:612px;top:362px;" width="24" height="28" viewBox="0 0 24 28"><rect x="1" y="1" width="22" height="26" fill="#fff" stroke="#ababab" stroke-width="2"/><path d="M6 8 H18 M6 12 H18 M6 16 H18 M6 20 H18" stroke="#c8c8c8" stroke-width="2"/></svg>
<div style="position:absolute;left:651px;top:366.18px;font-family:'Liberation Sans', sans-serif;font-size:30.5px;line-height:30.5px;color:#000;white-space:nowrap;">Introduction</div>
<div style="position:absolute;left:1906px;top:357.41px;font-family:'Liberation Sans', sans-serif;font-size:25.5px;line-height:25.5px;color:#000;white-space:nowrap;">Titled Text</div>
<svg style="position:absolute;left:2236px;top:360px;" width="26" height="26" viewBox="0 0 26 26"><rect x="1" y="1" width="24" height="24" rx="4" fill="#f2f2f2" stroke="#777" stroke-width="1.6"/></svg>
<svg style="position:absolute;left:578px;top:437px;" width="20" height="13" viewBox="0 0 20 13"><path d="M2 2 L10.0 10 L18 2" fill="none" stroke="#1a1a1a" stroke-width="3" stroke-linecap="round" stroke-linejoin="round"/></svg>
<svg style="position:absolute;left:612px;top:424px;" width="25" height="29" viewBox="0 0 25 29"><path d="M3 1 H19 V13 H22 V26 Q22 28 20 28 H3 Q1 28 1 26 V3 Q1 1 3 1 Z" fill="#aadff9" stroke="#6690aa" stroke-width="2" stroke-linejoin="round"/><rect x="19" y="1" width="5" height="11" rx="2" fill="#fff" stroke="#6690aa" stroke-width="2"/></svg>
<div style="position:absolute;left:651px;top:428.83px;font-family:'Liberation Sans', sans-serif;font-size:29.74px;line-height:29.74px;color:#1a8bd6;white-space:nowrap;"><b>Variation Under Domestication</b></div>
<div style="position:absolute;left:1906px;top:420.01px;font-family:'Liberation Sans', sans-serif;font-size:24.8px;line-height:24.8px;color:#7b7b7b;white-space:nowrap;font-style:italic">Chapter Folder</div>
<svg style="position:absolute;left:2236px;top:422px;" width="26" height="26" viewBox="0 0 26 26"><rect x="1" y="1" width="24" height="24" rx="4" fill="#f2f2f2" stroke="#777" stroke-width="1.6"/></svg>
<svg style="position:absolute;left:638px;top:487px;" width="24" height="28" viewBox="0 0 24 28"><rect x="1" y="1" width="22" height="26" fill="#fff" stroke="#ababab" stroke-width="2"/><path d="M6 8 H18 M6 12 H18 M6 16 H18 M6 20 H18" stroke="#c8c8c8" stroke-width="2"/></svg>
<div style="position:absolute;left:677px;top:491.27px;font-family:'Liberation Sans', sans-serif;font-size:25.67px;line-height:25.67px;color:#000;white-space:nowrap;letter-spacing:0.006px">Causes of Variability—Effects of Habit—Correlation of Growth—Inheritance—Character</div>
<div style="position:absolute;left:677px;top:527.27px;font-family:'Liberation Sans', sans-serif;font-size:25.67px;line-height:25.67px;color:#000;white-space:nowrap;letter-spacing:0.045px">of Domestic Varieties—Difficulty of distinguishing between Varieties and Species.</div>
<div style="position:absolute;left:1693px;top:477px;width:36px;height:36px;background:#fa5c52;border:1px solid #e04a40;box-sizing:border-box"></div>
<div style="position:absolute;left:1906px;top:481.94px;font-family:'Liberation Sans', sans-serif;font-size:23.7px;line-height:23.7px;color:#7b7b7b;white-space:nowrap;font-style:italic">Section</div>
<svg style="position:absolute;left:2236px;top:482px;" width="26" height="26" viewBox="0 0 26 26"><rect x="0" y="0" width="26" height="26" rx="4" fill="#0e5fc8"/><path d="M7.5 13.5 L11.5 17 L18.5 9.5" fill="none" stroke="#fff" stroke-width="1.8"/></svg>
<svg style="position:absolute;left:638px;top:578.5px;" width="24" height="28" viewBox="0 0 24 28"><rect x="1" y="1" width="22" height="26" fill="#fff" stroke="#ababab" stroke-width="2"/><path d="M6 8 H18 M6 12 H18 M6 16 H18 M6 20 H18" stroke="#c8c8c8" stroke-width="2"/></svg>
<div style="position:absolute;left:677px;top:582.77px;font-family:'Liberation Sans', sans-serif;font-size:25.67px;line-height:25.67px;color:#000;white-space:nowrap;letter-spacing:0.035px">Origin of Domestic Varieties from one or more Species—Domestic Pigeons, their</div>
<div style="position:absolute;left:677px;top:618.77px;font-family:'Liberation Sans', sans-serif;font-size:25.67px;line-height:25.67px;color:#000;white-space:nowrap;letter-spacing:0.002px">Differences and Origin—Principle of Selection anciently followed, its Effects.</div>
<div style="position:absolute;left:1693px;top:568.5px;width:36px;height:36px;background:#7ad94f;border:1px solid #62c040;box-sizing:border-box"></div>
<div style="position:absolute;left:1906px;top:573.44px;font-family:'Liberation Sans', sans-serif;font-size:23.7px;line-height:23.7px;color:#7b7b7b;white-space:nowrap;font-style:italic">Section</div>
<svg style="position:absolute;left:2236px;top:573.5px;" width="26" height="26" viewBox="0 0 26 26"><rect x="0" y="0" width="26" height="26" rx="4" fill="#0e5fc8"/><path d="M7.5 13.5 L11.5 17 L18.5 9.5" fill="none" stroke="#fff" stroke-width="1.8"/></svg>
<svg style="position:absolute;left:638px;top:670px;" width="24" height="28" viewBox="0 0 24 28"><rect x="1" y="1" width="22" height="26" fill="#fff" stroke="#ababab" stroke-width="2"/><path d="M6 8 H18 M6 12 H18 M6 16 H18 M6 20 H18" stroke="#c8c8c8" stroke-width="2"/></svg>
<div style="position:absolute;left:677px;top:674.27px;font-family:'Liberation Sans', sans-serif;font-size:25.67px;line-height:25.67px;color:#000;white-space:nowrap;letter-spacing:0.123px">Methodical and Unconscious Selection—Unknown Origin of our Domestic Productions</div>
<div style="position:absolute;left:677px;top:710.27px;font-family:'Liberation Sans', sans-serif;font-size:25.67px;line-height:25.67px;color:#000;white-space:nowrap;letter-spacing:-0.009px">—Circumstances favourable to Man's power of Selection.</div>
<div style="position:absolute;left:1693px;top:660px;width:36px;height:36px;background:#fa5c52;border:1px solid #e04a40;box-sizing:border-box"></div>
<div style="position:absolute;left:1731px;top:660px;width:36px;height:36px;background:#7ad94f;border:1px solid #62c040;box-sizing:border-box"></div>
<div style="position:absolute;left:1906px;top:664.94px;font-family:'Liberation Sans', sans-serif;font-size:23.7px;line-height:23.7px;color:#7b7b7b;white-space:nowrap;font-style:italic">Section</div>
<svg style="position:absolute;left:2236px;top:665px;" width="26" height="26" viewBox="0 0 26 26"><rect x="0" y="0" width="26" height="26" rx="4" fill="#0e5fc8"/><path d="M7.5 13.5 L11.5 17 L18.5 9.5" fill="none" stroke="#fff" stroke-width="1.8"/></svg>
<svg style="position:absolute;left:638px;top:825px;" width="24" height="28" viewBox="0 0 24 28"><rect x="1" y="1" width="22" height="26" fill="#fff" stroke="#ababab" stroke-width="2"/><path d="M6 8 H18 M6 12 H18 M6 16 H18 M6 20 H18" stroke="#c8c8c8" stroke-width="2"/></svg>
<div style="position:absolute;left:677px;top:829.27px;font-family:'Liberation Sans', sans-serif;font-size:25.67px;line-height:25.67px;color:#000;white-space:nowrap;letter-spacing:0.13px">Variability—Individual differences—Doubtful species—Wide ranging, much diffused,</div>
<div style="position:absolute;left:677px;top:865.27px;font-family:'Liberation Sans', sans-serif;font-size:25.67px;line-height:25.67px;color:#000;white-space:nowrap;letter-spacing:-0.11px">and common species vary most.</div>
<div style="position:absolute;left:1693px;top:815px;width:36px;height:36px;background:#fcd321;border:1px solid #e0b810;box-sizing:border-box"></div>
<div style="position:absolute;left:1906px;top:819.94px;font-family:'Liberation Sans', sans-serif;font-size:23.7px;line-height:23.7px;color:#7b7b7b;white-space:nowrap;font-style:italic">Section</div>
<svg style="position:absolute;left:2236px;top:820px;" width="26" height="26" viewBox="0 0 26 26"><rect x="0" y="0" width="26" height="26" rx="4" fill="#0e5fc8"/><path d="M7.5 13.5 L11.5 17 L18.5 9.5" fill="none" stroke="#fff" stroke-width="1.8"/></svg>
<svg style="position:absolute;left:636px;top:920px;" width="28" height="20" viewBox="0 0 28 20"><rect x="1" y="1" width="26" height="18" fill="#fff" stroke="#ababab" stroke-width="2"/><path d="M2 7 H26" stroke="#f5b4a0" stroke-width="2"/><path d="M2 11 H26 M2 15 H26" stroke="#a2daf8" stroke-width="2"/></svg>
<div style="position:absolute;left:677px;top:921.27px;font-family:'Liberation Sans', sans-serif;font-size:25.67px;line-height:25.67px;color:#000;white-space:nowrap;letter-spacing:0.004px">Species of the larger genera in any country vary more than the species of the smaller</div>
<div style="position:absolute;left:677px;top:957.27px;font-family:'Liberation Sans', sans-serif;font-size:25.67px;line-height:25.67px;color:#000;white-space:nowrap;letter-spacing:-0.555px">genera.</div>
<div style="position:absolute;left:1693px;top:907px;width:36px;height:36px;background:#7099f2;border:1px solid #5a82d8;box-sizing:border-box"></div>
<div style="position:absolute;left:1731px;top:907px;width:36px;height:36px;background:#fa5c52;border:1px solid #e04a40;box-sizing:border-box"></div>
<div style="position:absolute;left:1906px;top:911.94px;font-family:'Liberation Sans', sans-serif;font-size:23.7px;line-height:23.7px;color:#7b7b7b;white-space:nowrap;font-style:italic">Section</div>
<svg style="position:absolute;left:2236px;top:912px;" width="26" height="26" viewBox="0 0 26 26"><rect x="1" y="1" width="24" height="24" rx="4" fill="#f2f2f2" stroke="#777" stroke-width="1.6"/></svg>
<svg style="position:absolute;left:636px;top:1012px;" width="28" height="20" viewBox="0 0 28 20"><rect x="1" y="1" width="26" height="18" fill="#fff" stroke="#ababab" stroke-width="2"/><path d="M2 7 H26" stroke="#f5b4a0" stroke-width="2"/><path d="M2 11 H26 M2 15 H26" stroke="#a2daf8" stroke-width="2"/></svg>
<div style="position:absolute;left:677px;top:1013.27px;font-family:'Liberation Sans', sans-serif;font-size:25.67px;line-height:25.67px;color:#000;white-space:nowrap;letter-spacing:0.06px">Many of the species of the larger genera resemble varieties in being very closely, but</div>
<div style="position:absolute;left:677px;top:1049.27px;font-family:'Liberation Sans', sans-serif;font-size:25.67px;line-height:25.67px;color:#000;white-space:nowrap;letter-spacing:0.087px">unequally, related to each other, and in having restricted ranges.</div>
<div style="position:absolute;left:1693px;top:999px;width:36px;height:36px;background:#fcd321;border:1px solid #e0b810;box-sizing:border-box"></div>
<div style="position:absolute;left:1731px;top:999px;width:36px;height:36px;background:#7ad94f;border:1px solid #62c040;box-sizing:border-box"></div>
<div style="position:absolute;left:1769px;top:999px;width:36px;height:36px;background:#fa5c52;border:1px solid #e04a40;box-sizing:border-box"></div>
<div style="position:absolute;left:1906px;top:1003.94px;font-family:'Liberation Sans', sans-serif;font-size:23.7px;line-height:23.7px;color:#7b7b7b;white-space:nowrap;font-style:italic">Section</div>
<svg style="position:absolute;left:2236px;top:1004px;" width="26" height="26" viewBox="0 0 26 26"><rect x="1" y="1" width="24" height="24" rx="4" fill="#f2f2f2" stroke="#777" stroke-width="1.6"/></svg>
<svg style="position:absolute;left:578px;top:774px;" width="20" height="13" viewBox="0 0 20 13"><path d="M2 2 L10.0 10 L18 2" fill="none" stroke="#1a1a1a" stroke-width="3" stroke-linecap="round" stroke-linejoin="round"/></svg>
<svg style="position:absolute;left:612px;top:761px;" width="25" height="29" viewBox="0 0 25 29"><path d="M3 1 H19 V13 H22 V26 Q22 28 20 28 H3 Q1 28 1 26 V3 Q1 1 3 1 Z" fill="#aadff9" stroke="#6690aa" stroke-width="2" stroke-linejoin="round"/><rect x="19" y="1" width="5" height="11" rx="2" fill="#fff" stroke="#6690aa" stroke-width="2"/></svg>
<div style="position:absolute;left:651px;top:765.83px;font-family:'Liberation Sans', sans-serif;font-size:29.74px;line-height:29.74px;color:#1a8bd6;white-space:nowrap;"><b>Variation Under Nature</b></div>
<div style="position:absolute;left:1906px;top:757.51px;font-family:'Liberation Sans', sans-serif;font-size:24.8px;line-height:24.8px;color:#7b7b7b;white-space:nowrap;font-style:italic">Chapter Folder</div>
<svg style="position:absolute;left:2236px;top:759px;" width="26" height="26" viewBox="0 0 26 26"><rect x="1" y="1" width="24" height="24" rx="4" fill="#f2f2f2" stroke="#777" stroke-width="1.6"/></svg>
<svg style="position:absolute;left:589px;top:1107px;" width="24" height="24" viewBox="0 0 24 24"><path d="M12 1 V23 M1 12 H23" stroke="#555" stroke-width="2"/></svg>
<svg style="position:absolute;left:634px;top:1103px;" width="26" height="30" viewBox="0 0 26 30"><path d="M19 1.5 H3 Q1.5 1.5 1.5 3 V26 Q1.5 27.5 3 27.5 H19.5 Q21 27.5 21 26 V12.5" fill="none" stroke="#555" stroke-width="2"/><rect x="19" y="1.5" width="4.5" height="10.5" rx="2.2" fill="none" stroke="#555" stroke-width="2"/><path d="M11 10 V20 M6 15 H16" stroke="#555" stroke-width="2"/></svg>
<svg style="position:absolute;left:679px;top:1115px;" width="30" height="8" viewBox="0 0 30 8"><circle cx="4" cy="4" r="3" fill="#555"/><circle cx="14" cy="4" r="3" fill="#555"/><circle cx="24" cy="4" r="3" fill="#555"/></svg>
<svg style="position:absolute;left:723px;top:1106px;" width="32" height="24" viewBox="0 0 32 24"><path d="M16 4.6 H2.2 V20.6 H16" fill="none" stroke="#3b8ef0" stroke-width="2.4"/><path d="M7 12.6 H28.5 M21.5 5.6 L28.5 12.6 L21.5 19.6" fill="none" stroke="#3b8ef0" stroke-width="2.4"/></svg>
<div style="position:absolute;left:773px;top:1107.28px;font-family:'Liberation Sans', sans-serif;font-size:23.3px;line-height:23.3px;color:#000;white-space:nowrap;">64 items</div>
<svg style="position:absolute;left:2350px;top:1106px;" width="32" height="24" viewBox="0 0 32 24"><circle cx="3" cy="3" r="2.5" fill="#555"/><circle cx="3" cy="12" r="2.5" fill="#555"/><circle cx="3" cy="21" r="2.5" fill="#555"/><rect x="9" y="2" width="22" height="2.2" fill="#555"/><rect x="9" y="11" width="22" height="2.2" fill="#555"/><rect x="9" y="20" width="22" height="2.2" fill="#555"/></svg>
<svg style="position:absolute;left:593.5px;top:1157px;" width="15.5" height="25" viewBox="0 0 15.5 25"><path d="M13.5 2 L2 12.5 L13.5 23" fill="none" stroke="#555" stroke-width="2.4"/></svg>
<svg style="position:absolute;left:641.5px;top:1157px;" width="15.5" height="25" viewBox="0 0 15.5 25"><path d="M2 2 L13.5 12.5 L2 23" fill="none" stroke="#888" stroke-width="2.4"/></svg>
<svg style="position:absolute;left:684px;top:1153.5px;" width="25" height="29" viewBox="0 0 25 29"><path d="M3 1 H19 V13 H22 V26 Q22 28 20 28 H3 Q1 28 1 26 V3 Q1 1 3 1 Z" fill="#aadff9" stroke="#6690aa" stroke-width="2" stroke-linejoin="round"/><rect x="19" y="1" width="5" height="11" rx="2" fill="#fff" stroke="#6690aa" stroke-width="2"/></svg>
<div style="position:absolute;left:716px;top:1158.09px;font-family:'Liberation Sans', sans-serif;font-size:24.7px;line-height:24.7px;color:#6e6e6e;white-space:nowrap;">Variation Under Domestication:</div>
<div style="position:absolute;left:1070px;top:1158.43px;font-family:'Liberation Sans', sans-serif;font-size:24.3px;line-height:24.3px;color:#6e6e6e;white-space:nowrap;font-style:italic">Origin of Domestic Varieties from one or more Species</div>
<svg style="position:absolute;left:2220px;top:1161px;" width="20" height="16" viewBox="0 0 20 16"><rect x="0" y="1" width="20" height="2.2" fill="#515558"/><rect x="0" y="7.1" width="20" height="2.2" fill="#515558"/><rect x="0" y="13" width="20" height="2.2" fill="#515558"/></svg>
<svg style="position:absolute;left:2264px;top:1161px;" width="24" height="14" viewBox="0 0 24 14"><path d="M2 12 L12.0 2 L22 12" fill="none" stroke="#555" stroke-width="2.6"/></svg>
<svg style="position:absolute;left:2310px;top:1162px;" width="24" height="14" viewBox="0 0 24 14"><path d="M2 2 L12.0 12 L22 2" fill="none" stroke="#555" stroke-width="2.6"/></svg>
<svg style="position:absolute;left:2356px;top:1160px;" width="23" height="20" viewBox="0 0 23 20"><rect x="1.2" y="1.5" width="20.6" height="17.3" rx="1.5" fill="none" stroke="#555" stroke-width="2.4"/><rect x="1" y="1" width="21" height="4" fill="#555"/></svg>
<div style="position:absolute;left:833px;top:1198.82px;font-family:'Liberation Serif', serif;font-size:35.44px;line-height:35.44px;color:#111;white-space:nowrap;-webkit-text-stroke:0.3px #111;letter-spacing:-0.055px;transform:scaleY(0.818);transform-origin:0 29.68px">here enter on the copious details which I have collected on [9]this curious subject; but to</div>
<div style="position:absolute;left:833px;top:1240.57px;font-family:'Liberation Serif', serif;font-size:35.44px;line-height:35.44px;color:#111;white-space:nowrap;-webkit-text-stroke:0.3px #111;letter-spacing:0.0px;transform:scaleY(0.818);transform-origin:0 29.68px">show how singular the laws are which determine the reproduction of animals under</div>
<div style="position:absolute;left:833px;top:1282.32px;font-family:'Liberation Serif', serif;font-size:35.44px;line-height:35.44px;color:#111;white-space:nowrap;-webkit-text-stroke:0.3px #111;letter-spacing:-0.049px;transform:scaleY(0.818);transform-origin:0 29.68px">confinement, I may just mention that carnivorous animals, even from the tropics, breed</div>
<div style="position:absolute;left:833px;top:1324.07px;font-family:'Liberation Serif', serif;font-size:35.44px;line-height:35.44px;color:#111;white-space:nowrap;-webkit-text-stroke:0.3px #111;letter-spacing:0.033px;transform:scaleY(0.818);transform-origin:0 29.68px">in this country pretty freely under confinement, <span style="background:#fffa80;padding:11.2px 0 5.2px">with the exception of the plantigrades</span> or</div>
<div style="position:absolute;left:833px;top:1365.82px;font-family:'Liberation Serif', serif;font-size:35.44px;line-height:35.44px;color:#111;white-space:nowrap;-webkit-text-stroke:0.3px #111;letter-spacing:0.009px;transform:scaleY(0.818);transform-origin:0 29.68px">bear family; whereas carnivorous birds, with the rarest exceptions, hardly ever lay fertile</div>
<div style="position:absolute;left:833px;top:1407.57px;font-family:'Liberation Serif', serif;font-size:35.44px;line-height:35.44px;color:#111;white-space:nowrap;-webkit-text-stroke:0.3px #111;letter-spacing:-0.144px;transform:scaleY(0.818);transform-origin:0 29.68px">eggs. Many exotic plants have pollen utterly worthless, in the same exact condition as in</div>
<div style="position:absolute;left:833px;top:1449.32px;font-family:'Liberation Serif', serif;font-size:35.44px;line-height:35.44px;color:#111;white-space:nowrap;-webkit-text-stroke:0.3px #111;letter-spacing:-0.019px;transform:scaleY(0.818);transform-origin:0 29.68px">the most sterile hybrids. When, on the one hand, we see domesticated animals and plants,</div>
<div style="position:absolute;left:833px;top:1491.07px;font-family:'Liberation Serif', serif;font-size:35.44px;line-height:35.44px;color:#111;white-space:nowrap;-webkit-text-stroke:0.3px #111;letter-spacing:-0.107px;transform:scaleY(0.818);transform-origin:0 29.68px">though often weak and sickly, yet breeding quite freely under confinement; and when, on</div>
<div style="position:absolute;left:833px;top:1532.82px;font-family:'Liberation Serif', serif;font-size:35.44px;line-height:35.44px;color:#111;white-space:nowrap;-webkit-text-stroke:0.3px #111;letter-spacing:-0.011px;transform:scaleY(0.818);transform-origin:0 29.68px">the other hand, we see individuals, though taken young from a state of nature, perfectly</div>
<div style="position:absolute;left:833px;top:1574.57px;font-family:'Liberation Serif', serif;font-size:35.44px;line-height:35.44px;color:#111;white-space:nowrap;-webkit-text-stroke:0.3px #111;letter-spacing:-0.215px;transform:scaleY(0.818);transform-origin:0 29.68px">tamed, long-lived, and healthy (of which I could give numerous instances), yet having</div>
<div style="position:absolute;left:833px;top:1616.32px;font-family:'Liberation Serif', serif;font-size:35.44px;line-height:35.44px;color:#111;white-space:nowrap;-webkit-text-stroke:0.3px #111;letter-spacing:-0.102px;transform:scaleY(0.818);transform-origin:0 29.68px">their reproductive system so seriously affected by unperceived causes as to fail in acting,</div>
<div style="position:absolute;left:833px;top:1658.07px;font-family:'Liberation Serif', serif;font-size:35.44px;line-height:35.44px;color:#111;white-space:nowrap;-webkit-text-stroke:0.3px #111;letter-spacing:0.043px;transform:scaleY(0.818);transform-origin:0 29.68px">we need not be surprised at this system, when it does act under confinement, acting not</div>
<div style="position:absolute;left:833px;top:1699.82px;font-family:'Liberation Serif', serif;font-size:35.44px;line-height:35.44px;color:#111;white-space:nowrap;-webkit-text-stroke:0.3px #111;letter-spacing:-0.004px;transform:scaleY(0.818);transform-origin:0 29.68px">quite regularly, and producing offspring not perfectly like their parents.<span style="color:#a80c0c;-webkit-text-stroke:0;border:1px solid #c84848;border-radius:9px/11px;padding:3.6px 1px 9px 1px">Check notes.</span></div>
<div style="position:absolute;left:881px;top:1741.57px;font-family:'Liberation Serif', serif;font-size:35.44px;line-height:35.44px;color:#111;white-space:nowrap;-webkit-text-stroke:0.3px #111;letter-spacing:-0.027px;transform:scaleY(0.818);transform-origin:0 29.68px">Sterility has been said to be the bane of horticulture; but on this view we owe</div>
<div style="position:absolute;left:601px;top:1806.95px;font-family:'Liberation Sans', sans-serif;font-size:22.5px;line-height:22.5px;color:#000;white-space:nowrap;">100%</div>
<svg style="position:absolute;left:670px;top:1814px;" width="13" height="7" viewBox="0 0 13 7"><path d="M0 0 L13 0 L6.5 7 Z" fill="#666"/></svg>
<div style="position:absolute;left:1450px;top:1806.19px;font-family:'Liberation Sans', sans-serif;font-size:23.4px;line-height:23.4px;color:#000;white-space:nowrap;">11,713 words</div>
<svg style="position:absolute;left:2353px;top:1803px;" width="30" height="30" viewBox="0 0 30 30"><path d="M13.5 27 H2 V2 H24 V16" fill="none" stroke="#555" stroke-width="2.2"/><path d="M13 22 L19 28 L29 18" fill="none" stroke="#666" stroke-width="2.6" stroke-linecap="round" stroke-linejoin="round"/></svg>
</div>
<div style="position:absolute;left:0;top:0;width:2390px;height:1844px;border-radius:16px;border:2px solid #777;box-sizing:border-box"></div>
</body></html>
